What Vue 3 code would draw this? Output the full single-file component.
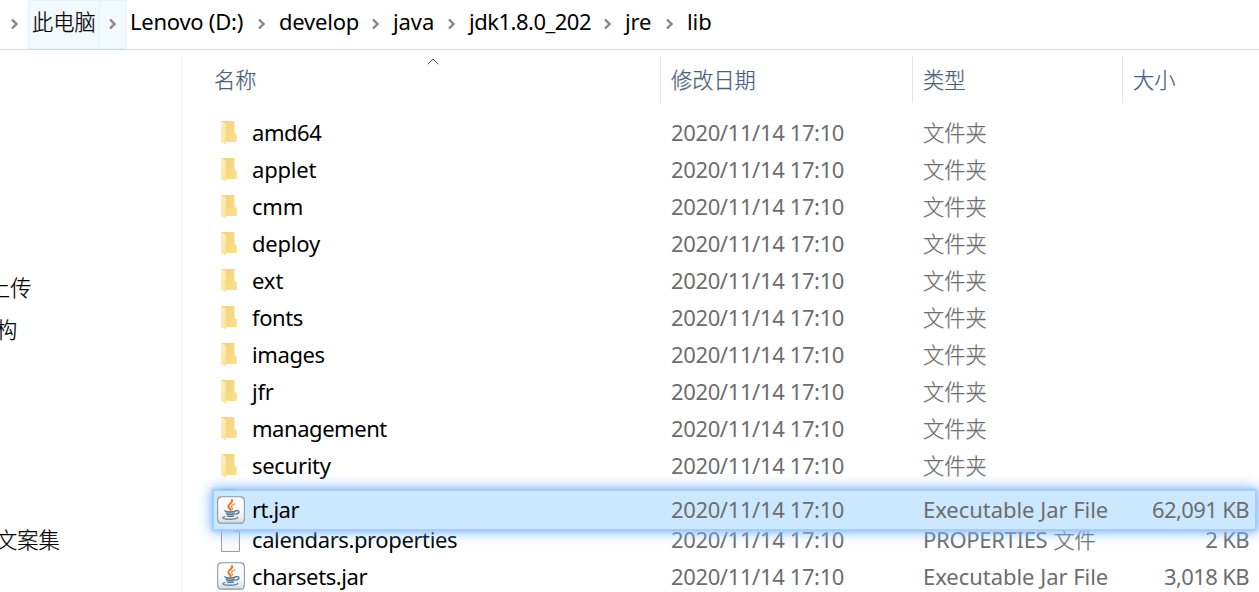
<script setup>
const crumbs = [
  { label: '此电脑', cjk: true, active: true, width: 98 },
  { label: 'Lenovo (D:)', width: 149, ls: -0.25 },
  { label: 'develop', width: 114, ls: -0.2 },
  { label: 'java', width: 76, ls: -0.1 },
  { label: 'jdk1.8.0_202', width: 156, ls: -0.5 },
  { label: 'jre', width: 62, ls: -0.2 },
  { label: 'lib', width: 60, ls: -0.1 },
]
const folder = (name, ls = -0.3) => ({ name, ls, icon: 'folder', type: '文件夹', cjk: true })
const rows = [
  folder('amd64', -0.45), folder('applet', -0.2), folder('cmm', -0.2), folder('deploy', -0.2), folder('ext', -0.1),
  folder('fonts', -0.4), folder('images', -0.4), folder('jfr'), folder('management', -0.45), folder('security', -0.3),
  { icon: 'file', covered: true },
  { name: 'calendars.properties', ls: -0.4, icon: 'file', type: 'PROPERTIES', suffix: '文件', size: '2 KB' },
  { name: 'charsets.jar', ls: -0.4, icon: 'jar', type: 'Executable Jar File', wide: true, size: '3,018 KB' },
]
const picked = { name: 'rt.jar', ls: -0.5, icon: 'jar', type: 'Executable Jar File', wide: true, size: '62,091 KB', picked: true }
const allRows = [...rows, picked]
const date = '2020/11/14 17:10'
</script>

<template>
  <div class="window">
    <svg class="defs" width="0" height="0">
      <defs>
        <linearGradient id="front" x1="0" y1="0" x2="1" y2="1">
          <stop offset="0" stop-color="#fff0c4" /><stop offset="1" stop-color="#fbe196" />
        </linearGradient>
        <linearGradient id="back" x1="0" y1="0" x2="1" y2="1">
          <stop offset="0" stop-color="#f0d17d" /><stop offset="1" stop-color="#fde08a" />
        </linearGradient>
        <linearGradient id="tile" x1="0" y1="0" x2="0" y2="1">
          <stop offset="0" stop-color="#ffffff" /><stop offset=".6" stop-color="#f7f7f8" /><stop offset="1" stop-color="#d9dcdf" />
        </linearGradient>
      </defs>
    </svg>

    <nav class="address">
      <span class="lead"><svg class="chev" viewBox="0 0 10 12"><path d="M2 1.5 6.5 6 2 10.500" /></svg></span>
      <span v-for="(c, i) in crumbs" :key="c.label" class="crumb" :class="{ active: c.active }" :style="{ width: c.width + 'px', letterSpacing: (c.ls || 0) + 'px' }">
        <span class="label" :class="{ cjk: c.cjk }">{{ c.label }}</span>
        <span v-if="i < crumbs.length - 1" class="next"><svg class="chev" viewBox="0 0 10 12"><path d="M2 1.5 6.5 6 2 10.500" /></svg></span>
      </span>
    </nav>

    <div class="body">
      <aside class="tree">
        <div class="node upload cjk">上传</div>
        <div class="node build cjk">构</div>
        <div class="node docs cjk">文案集</div>
      </aside>
      <main class="list">
        <header class="head cjk">
          <span class="h name-h">名称<svg class="sort" viewBox="0 0 12 7"><path d="M.7 6.300 6 1l5.300 5.300" /></svg></span>
          <span class="h">修改日期</span>
          <span class="h">类型</span>
          <span class="h">大小</span>
        </header>
        <div class="rows">
          <div v-for="(r, i) in allRows" :key="i" class="row" :class="{ picked: r.picked }">
            <span class="icon">
              <svg v-if="r.icon === 'folder'" width="18" height="26" viewBox="0 0 18 26">
                <path d="M1 1H14.500V12.500L16.800 14.500V22H5Z" fill="url(#back)" />
                <path d="M1 1 6 3.500V24.500L1 22Z" fill="url(#front)" />
              </svg>
              <svg v-else-if="r.icon === 'file'" class="page" width="20" height="26" viewBox="0 0 20 26">
                <path d="M.5.5H14L18.500 5V25.500H.5Z" fill="#fafafa" stroke="#999da1" />
                <path d="M13.500.5V5.500H18.500" fill="#fff" stroke="#999da1" />
              </svg>
              <svg v-else class="jar" width="28" height="28" viewBox="0 0 28 28">
                <rect x=".8" y=".8" width="26.400" height="26.400" rx="3.500" fill="url(#tile)" stroke="#8798a8" stroke-width="1.300" />
                <path d="M2 23V5Q2 2 5 2H23Q26 2 26 5V23" fill="none" stroke="#fff" />
                <g fill="none" stroke-linecap="round">
                  <path d="M15 4C16.200 7 10.800 8 11.300 10.500 11.600 12 13.500 12.300 13.400 14" stroke="#e8792c" stroke-width="2" />
                  <path d="M17.500 7.800C15 8.900 13.700 10.200 15 11.600 15.600 12.400 15.400 13.200 14.800 14" stroke="#ef9352" stroke-width="1.400" />
                  <path d="M8 14.800Q13 16.500 18.500 14.800L17.500 19Q13.500 20.800 9.500 19Z" fill="#a9bccb" stroke="none" />
                  <path d="M8 14.600C8 16.400 17 16.400 18.800 14.800" stroke="#557894" stroke-width="1.400" />
                  <path d="M19.200 14.800C23 13.900 23 17.400 18.800 18.200" stroke="#557894" stroke-width="1.300" />
                  <path d="M9.300 17.600Q13.500 19 17.500 17.600M10.200 19.900Q13.500 21 16.700 19.900" stroke="#557894" stroke-width="1.300" />
                  <path d="M7.600 20.700C3.500 22.300 8 23.200 13 23.200S21 22.300 20.500 21.300" stroke="#6987a0" stroke-width="1.400" />
                </g>
              </svg>
            </span>
            <template v-if="!r.covered">
              <span class="name" :style="{ letterSpacing: r.ls + 'px' }">{{ r.name }}</span>
              <span class="date">{{ date }}</span>
              <span class="type" :class="{ wide: r.wide }"><span :class="{ cjk: r.cjk }">{{ r.type }}</span><span v-if="r.suffix" class="cjk suffix">{{ r.suffix }}</span></span>
              <span class="size">{{ r.size }}</span>
            </template>
          </div>
        </div>
      </main>
    </div>
  </div>
</template>

<style>
html, body { margin: 0; overflow: hidden; background: #fff; }
</style>

<style scoped>
.window { width: 1259px; height: 592px; overflow: hidden; display: flex; flex-direction: column; background: #fff; color: #000; font: 22px/37px "Noto Sans", "Noto Sans CJK SC", sans-serif; white-space: nowrap; position: relative; }
.defs { position: absolute; }
.cjk { font-family: "Noto Sans CJK SC", sans-serif; font-size: 21.200px; font-weight: 300; letter-spacing: 0; -webkit-text-stroke: .25px currentColor; }
.address { height: 49px; flex: none; display: flex; border-bottom: 1px solid #d9d9d9; }
.lead { width: 28px; display: flex; align-items: center; padding-left: 10px; box-sizing: border-box; }
.crumb { display: flex; box-sizing: border-box; height: 49px; justify-content: space-between; }
.crumb .label { padding-left: 4px; line-height: 43px; }
.crumb .label.cjk { line-height: 42px; }
.crumb.active { background: #f2f9ff; box-shadow: inset 0 0 0 1px #e0f2ff; }
.active .next { border-left: 1px solid #e0f2ff; }
.next { width: 27px; box-sizing: border-box; display: flex; align-items: center; padding-left: 9px; }
.active .next { padding-left: 8px; }
.chev { width: 10px; height: 12px; margin-top: -2px; }
.chev path { fill: none; stroke: #858585; stroke-width: 2.400; }
.body { flex: 1; min-height: 0; display: flex; }
.tree { width: 183px; flex: none; margin-top: 6px; box-sizing: border-box; border-right: 2px solid #f5f5f5; overflow: hidden; }
.node { height: 37px; }
.upload { margin: 212px 0 0 -11px; }
.build { margin: 5px 0 0 -4px; }
.docs { margin: 173px 0 0 -4px; }
.list { flex: 1; min-width: 0; }
.head { display: grid; grid-template-columns: 478px 252px 210px 1fr; height: 47px; margin-top: 6px; color: #4c607a; line-height: 46px; }
.h { padding-left: 10px; border-right: 1px solid #e4e4e4; position: relative; }
.h:last-child { border: 0; }
.name-h { padding-left: 31px; }
.sort { position: absolute; left: 243.500px; top: 2px; width: 12px; height: 7px; }
.sort path { fill: none; stroke: #555; stroke-width: 1; }
.rows { padding-top: 11px; position: relative; }
.row { height: 37px; display: grid; grid-template-columns: 69px 419px 252px 200px 126px; position: relative; }
.icon { display: flex; align-items: center; padding-left: 37px; }
.page { margin: -2px 0 0 1px; }
.jar { margin: -1px 0 0 -3px; flex: none; }
.date, .type, .size { color: #6d6d6d; }
.date { letter-spacing: -.37px; }
.type { letter-spacing: -.3px; }
.type.wide { letter-spacing: -.04px; }
.type > .cjk { display: inline-block; line-height: 35px; vertical-align: top; }
.size { text-align: right; letter-spacing: -.6px; }
.suffix { margin-left: 6px; }
.picked { position: absolute; top: 387px; left: 30px; right: 3px; height: 40px; box-sizing: border-box; grid-template-columns: 39px 419px 252px 200px 126px; line-height: 38px; background: #cce8ff; box-shadow: inset 0 0 0 1px #99d1ff, 0 0 3px 1px #9cc7f9, 0 0 12px 2px #7fb3ff; }
.picked .icon { padding-left: 7px; }
</style>
